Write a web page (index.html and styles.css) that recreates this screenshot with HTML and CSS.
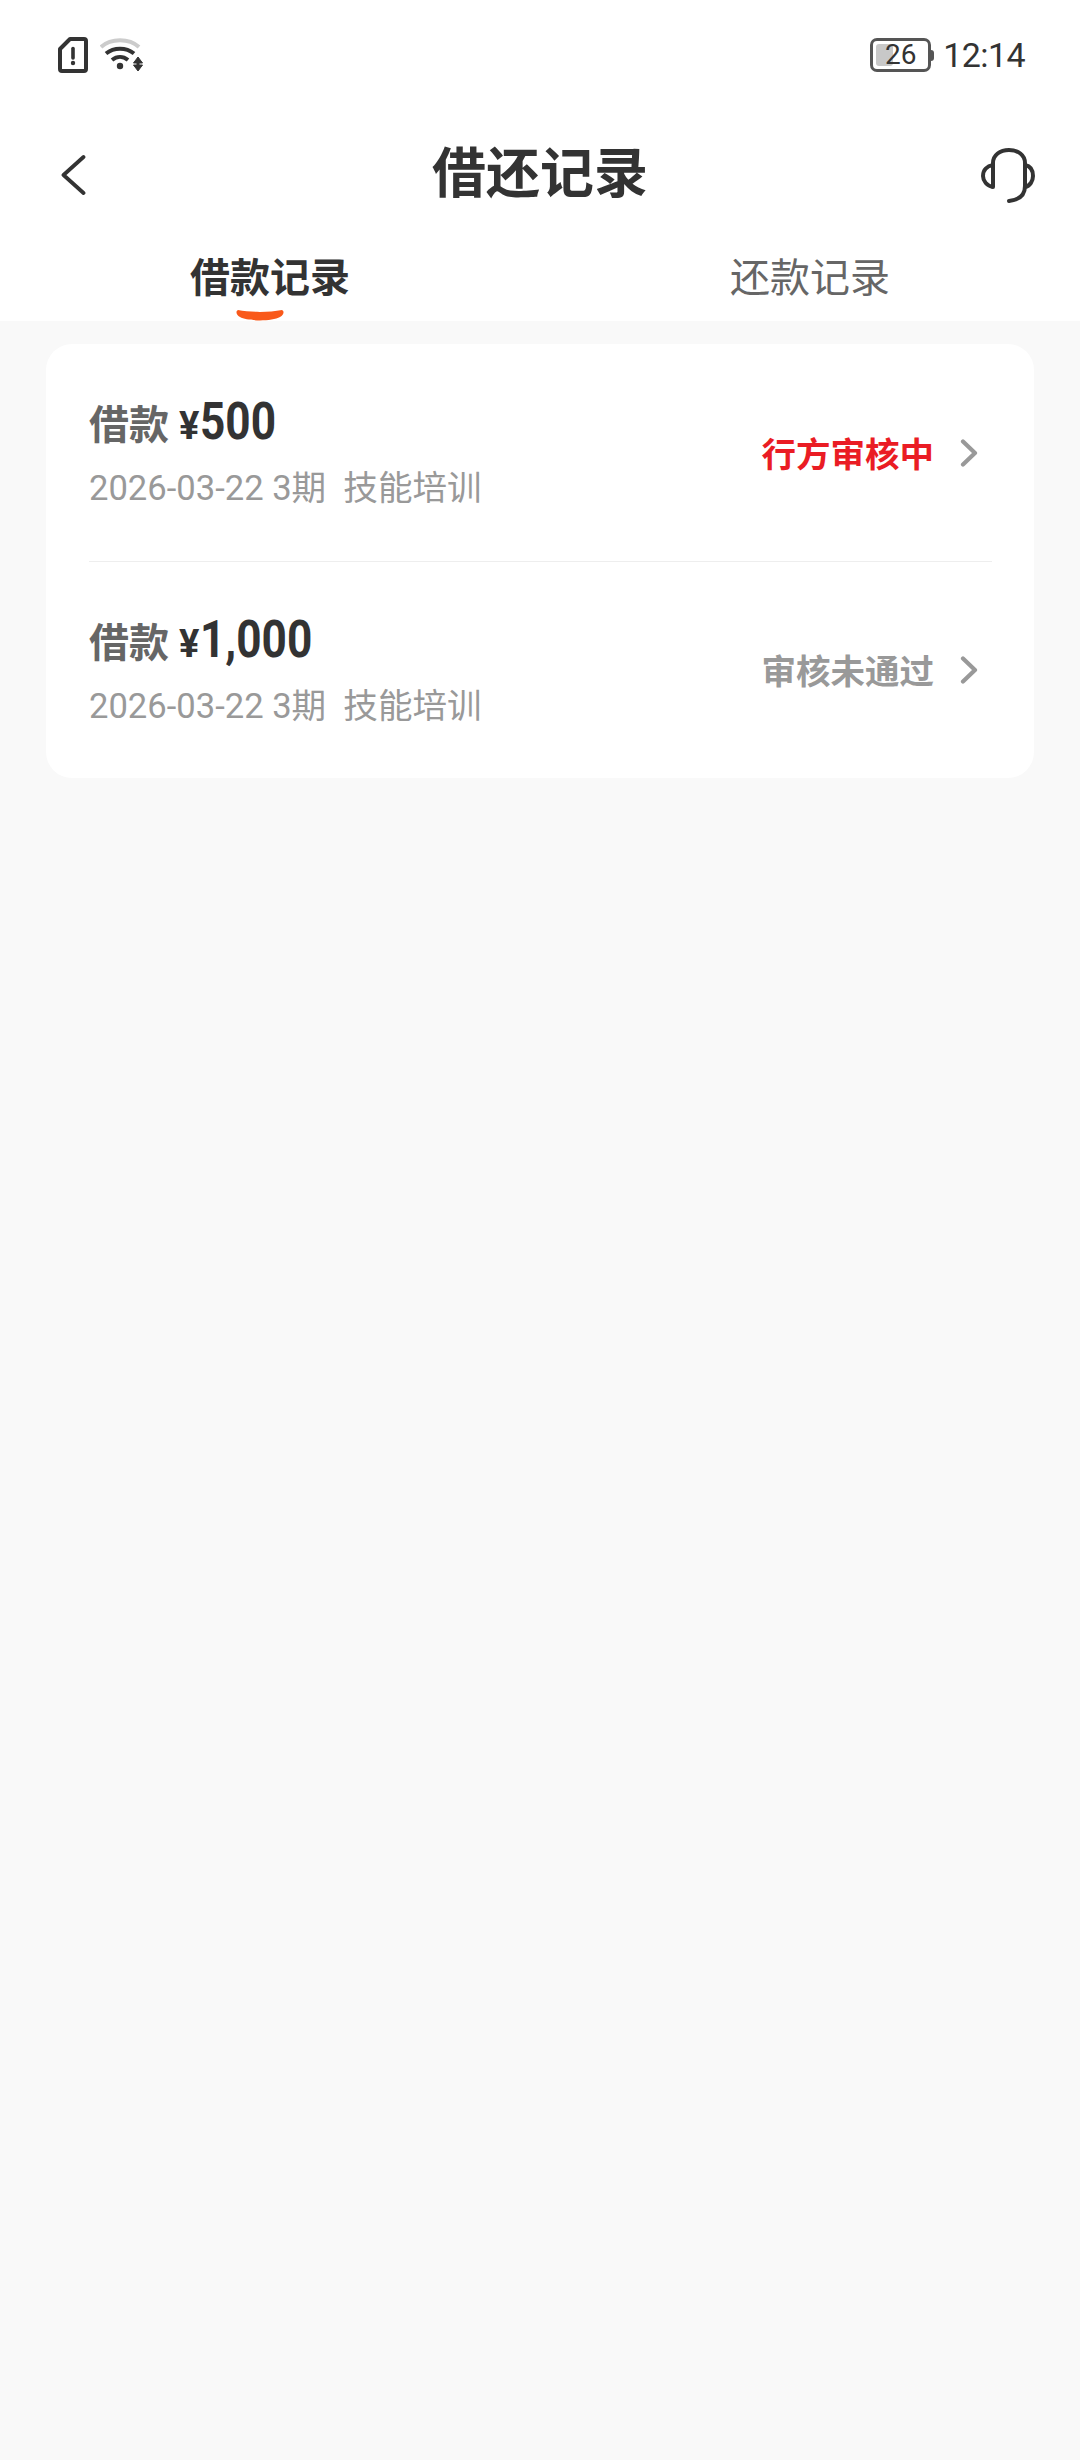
FILE: index.html
```html
<!DOCTYPE html>
<html lang="zh-CN">
<head>
    <meta charset="UTF-8">
    <title>借还记录</title>
    <meta name="viewport" content="width=device-width, initial-scale=1.0">
    <link rel="stylesheet" href="styles.css">
</head>
<body>
    <div class="top">
        <!-- status bar -->
        <div class="status-bar">
            <div class="status-left">
                <svg width="30" height="36" viewBox="0 0 30 36">
                    <path d="M12 2H26a2 2 0 0 1 2 2V32a2 2 0 0 1-2 2H4a2 2 0 0 1-2-2V12Z" fill="none" stroke="#333" stroke-width="4" stroke-linejoin="round"/>
                    <path d="M15 11.500V21" stroke="#333" stroke-width="3.600" stroke-linecap="round"/>
                    <circle cx="15" cy="26" r="2.200" fill="#333"/>
                </svg>
                <svg width="44" height="34" viewBox="0 0 44 34">
                    <path d="M1 9C11 0 29 0 39 9" fill="none" stroke="#ccc" stroke-width="4"/>
                    <path d="M6 15.500C14 9 26 9 34 15.500" fill="none" stroke="#333" stroke-width="4"/>
                    <path d="M12 22C17 18 23 18 28 22" fill="none" stroke="#333" stroke-width="4"/>
                    <circle cx="20" cy="28" r="3.200" fill="#333"/>
                    <path d="M38 19L42.500 25H33.500ZM38 33L42.500 27H33.500Z" fill="#333" stroke="#333" stroke-width="1" stroke-linejoin="round"/>
                    <path d="M38 24V28" stroke="#333" stroke-width="3"/>
                </svg>
            </div>
            <div class="status-right">
                <div class="battery">
                    <div class="battery-body">
                        <span class="battery-fill"></span>
                        <span class="battery-num">26</span>
                    </div>
                    <span class="battery-tip"></span>
                </div>
                <span class="clock">12:14</span>
            </div>
        </div>

        <div class="nav">
            <svg class="nav-back" width="26" height="44" viewBox="0 0 26 44">
                <path d="M23.500 4L3.500 22L23.500 40" fill="none" stroke="#333" stroke-width="3.800" stroke-linecap="round" stroke-linejoin="round"/>
            </svg>
            <h1 class="nav-title">借还记录</h1>
            <svg class="nav-service" width="54" height="55" viewBox="0 0 54 55">
                <path d="M12 39V15C12 7 19 2 28 2C37 2 44 7 44 15V38C44 47 38 52 28 53" fill="none" stroke="#333" stroke-width="4" stroke-linecap="round"/>
                <path d="M12 17C6 18 2 22 2 28C2 33 6 38 12 39" fill="none" stroke="#333" stroke-width="4"/>
                <path d="M44 17C49 18 52 22 52 28C52 33 49 38 44 39" fill="none" stroke="#333" stroke-width="4"/>
            </svg>
        </div>

        <div class="tabs">
            <div class="tab tab-active">借款记录
                <svg class="tab-mark" width="48" height="14" viewBox="0 0 48 14">
                    <path d="M2 2C15 4.500 33 4.500 46 2C48.500 3 48 7 44 9C36 13.500 12 13.500 4 9C0 7 -.5 3 2 2Z" fill="#f9591a"/>
                </svg>
            </div>
            <div class="tab">还款记录</div>
        </div>
    </div>

    <div class="card">
        <div class="row">
            <div class="row-info">
                <div class="row-title"><span class="label">借款</span><span class="yen">¥</span><span class="amount">500</span></div>
                <div class="row-sub">2026-03-22 3期&nbsp;&nbsp;技能培训</div>
            </div>
            <span class="state state-red">行方审核中</span>
            <svg class="chevron" width="18" height="28" viewBox="0 0 18 28">
                <path d="M3 2.500L15 14L3 25.500" fill="none" stroke="#999" stroke-width="4.200" stroke-linecap="round" stroke-linejoin="round"/>
            </svg>
        </div>
        <div class="row">
            <div class="row-info">
                <div class="row-title"><span class="label">借款</span><span class="yen">¥</span><span class="amount">1,000</span></div>
                <div class="row-sub">2026-03-22 3期&nbsp;&nbsp;技能培训</div>
            </div>
            <span class="state">审核未通过</span>
            <svg class="chevron" width="18" height="28" viewBox="0 0 18 28">
                <path d="M3 2.500L15 14L3 25.500" fill="none" stroke="#999" stroke-width="4.200" stroke-linecap="round" stroke-linejoin="round"/>
            </svg>
        </div>
    </div>
</body>
</html>
```

FILE: styles.css
```css
body {
    margin: 0;
    min-height: 2460px;
    background-color: #f9f9f9;
    color: #333;
    font-family: Roboto, "Noto Sans CJK SC", sans-serif;
}
.top {
    height: 321px;
    background-color: #fff;
}
.status-bar {
    height: 110px;
    display: flex;
    justify-content: space-between;
    align-items: center;
    padding: 0 55px 0 58px;
}
.status-left {
    display: flex;
    align-items: center;
    gap: 12px;
}
.status-right {
    display: flex;
    align-items: center;
    gap: 9px;
}
.battery {
    display: flex;
    align-items: center;
}
.battery-body {
    position: relative;
    width: 55px;
    height: 28px;
    border: 3px solid #555;
    border-radius: 7px;
    display: flex;
    justify-content: center;
    align-items: center;
}
.battery-fill {
    position: absolute;
    left: 3px;
    top: 3px;
    bottom: 3px;
    width: 17px;
    background-color: #c8c8c8;
    border-radius: 3px;
}
.battery-num {
    position: relative;
    font-size: 28px;
    line-height: 28px;
    color: #333;
}
.battery-tip {
    width: 3px;
    height: 11px;
    background-color: #555;
    border-radius: 0 4px 4px 0;
}
.clock {
    font-size: 34px;
    line-height: 40px;
    letter-spacing: -.6px;
}
.nav {
    height: 130px;
    display: grid;
    grid-template-columns: 1fr auto 1fr;
    align-items: center;
    padding: 0 45px;
}
.nav-back {
    margin-left: 15px;
}
.nav-service {
    justify-self: end;
}
.nav-title {
    margin: 0;
    font-size: 54px;
    font-weight: 700;
    line-height: 70px;
}
.tabs {
    display: flex;
    height: 81px;
}
.tab {
    position: relative;
    flex: 1;
    padding-top: 13px;
    text-align: center;
    font-size: 40px;
    line-height: 52px;
    color: #666;
}
.tab-active {
    font-weight: 700;
    color: #333;
}
.tab-mark {
    position: absolute;
    left: 236px;
    top: 68px;
}
.card {
    margin: 23px 46px 0 46px;
    background-color: #fff;
    border-radius: 26px;
    padding: 0 42px 0 43px;
}
.row {
    height: 217px;
    box-sizing: border-box;
    display: flex;
    align-items: center;
}
.row + .row {
    border-top: 1px solid #eee;
}
.row + .row .row-info {
    margin-top: 2px;
}
.row-info {
    flex: 1;
}
.row-title {
    display: flex;
    align-items: baseline;
    font-weight: 700;
    line-height: 60px;
    margin-top: -4px;
}
.label {
    font-size: 40px;
    color: #666;
    margin-right: 10px;
}
.yen {
    font-size: 38px;
    margin-right: 1px;
}
/* digits in the reference are narrower than Roboto */
.amount {
    font-size: 52px;
    transform: scaleX(.85);
    transform-origin: left;
}
.row-sub {
    margin-top: 10px;
    font-size: 34.6px;
    line-height: 44px;
    color: #999;
}
.state {
    margin-top: -2px;
    font-size: 34.5px;
    font-weight: 700;
    color: #999;
}
.state-red {
    color: #ea1c24;
}
.chevron {
    margin-left: 26px;
    margin-right: 14px;
}
```
